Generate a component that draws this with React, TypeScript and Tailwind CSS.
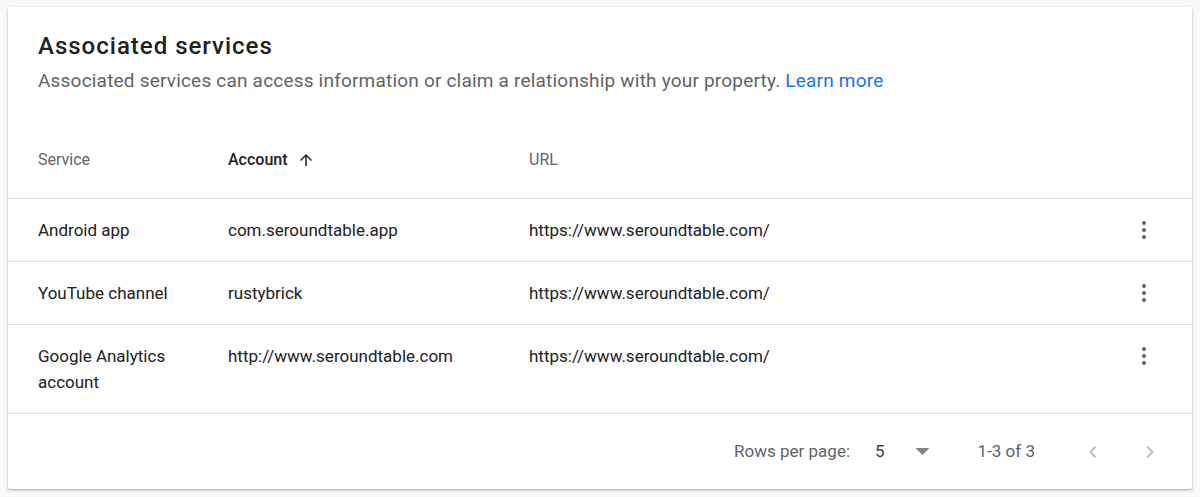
import type { ReactNode } from 'react';

type Row = { service: ReactNode; account: string; url: string };

const ROWS: Row[] = [
  { service: 'Android app', account: 'com.seroundtable.app', url: 'https://www.seroundtable.com/' },
  { service: 'YouTube channel', account: 'rustybrick', url: 'https://www.seroundtable.com/' },
  {
    service: (
      <>
        Google Analytics
        <br />
        account
      </>
    ),
    account: 'http://www.seroundtable.com',
    url: 'https://www.seroundtable.com/',
  },
];

function MoreVert() {
  return (
    <svg viewBox="0 0 24 24" className="h-6 w-6 fill-[#5f6368]" aria-hidden>
      <circle cx="12" cy="5" r="2" />
      <circle cx="12" cy="12" r="2" />
      <circle cx="12" cy="19" r="2" />
    </svg>
  );
}

function ArrowUp() {
  return (
    <svg viewBox="0 0 24 24" className="h-[18px] w-[18px] fill-[#202124]" aria-hidden>
      <path d="M4 12l1.41 1.41L11 7.83V20h2V7.83l5.58 5.59L20 12l-8-8-8 8z" />
    </svg>
  );
}

function Chevron({ dir }: { dir: 'left' | 'right' }) {
  return (
    <svg viewBox="0 0 24 24" className="h-6 w-6 fill-[#bdc1c6]" aria-hidden>
      {dir === 'left' ? (
        <path d="M15.41 7.41L14 6l-6 6 6 6 1.41-1.41L10.83 12z" />
      ) : (
        <path d="M10 6L8.59 7.41 13.17 12l-4.58 4.59L10 18l6-6z" />
      )}
    </svg>
  );
}

export default function App() {
  return (
    <div className="min-h-[497px] bg-[#f8f9fa] pl-2 pr-2 pt-[7px] font-['Roboto','Liberation_Sans',sans-serif]">
      <div className="w-[1184px] rounded-[2px] bg-white shadow-[0_1px_3px_rgba(60,64,67,0.3),0_1px_2px_rgba(60,64,67,0.15)]">
        <div className="px-[30px] pt-[23px]">
          <h1 className="text-[24px] font-medium leading-8 tracking-[1px] text-[#202124]">Associated services</h1>
          <p className="mt-[7px] text-[19px] leading-6 tracking-[0.2px] text-[#5f6368]">
            Associated services can access information or claim a relationship with your property.{' '}
            <a href="#" className="text-[#1a73e8]">
              Learn more
            </a>
          </p>
        </div>

        <div className="mt-[57px] flex border-b border-[#e0e0e0] pb-[28px] pl-[30px] text-[16px] leading-5 text-[#5f6368]">
          <div className="w-[190px]">Service</div>
          <div className="flex w-[301px] items-center gap-[9px] font-medium text-[#202124]">
            Account
            <ArrowUp />
          </div>
          <div>URL</div>
        </div>

        {ROWS.map((r) => (
          <div
            key={r.account}
            className="flex items-start border-b border-[#e0e0e0] py-[18px] pl-[30px] pr-[36px] text-[17px] leading-[26px] text-[#202124]"
          >
            <div className="w-[190px]">{r.service}</div>
            <div className="w-[301px]">{r.account}</div>
            <div className="flex-1">{r.url}</div>
            <div className="flex h-[26px] items-center">
              <MoreVert />
            </div>
          </div>
        ))}

        <div className="flex h-[75px] items-center justify-end pr-[30px] text-[17px] text-[#5f6368]">
          <span>Rows per page:</span>
          <span className="ml-[25px] text-[#3c4043]">5</span>
          <svg viewBox="0 0 14 7" className="ml-[30px] h-[7px] w-[15px] fill-[#80868b]" aria-hidden>
            <path d="M0 0h14L7 7z" />
          </svg>
          <span className="ml-[48px]">1-3 of 3</span>
          <div className="ml-[46px]">
            <Chevron dir="left" />
          </div>
          <div className="ml-[33px]">
            <Chevron dir="right" />
          </div>
        </div>
      </div>
    </div>
  );
}
